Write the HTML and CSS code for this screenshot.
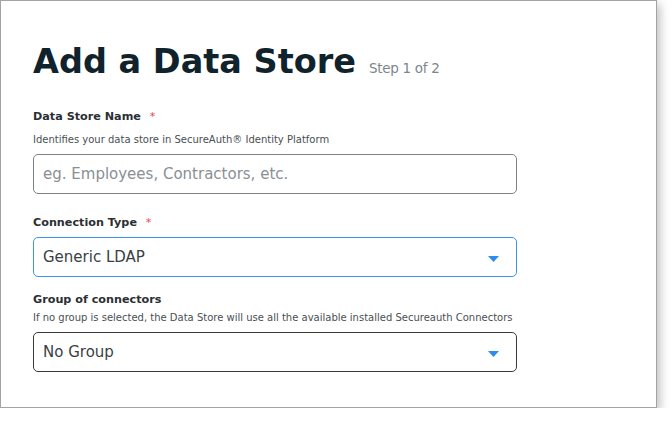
FILE: index.html
```html
<!DOCTYPE html>
<html><head>
<link rel="stylesheet" href="styles.css">
</head>
<body>

<div class="card">
  <div class="title-row">
    <h1 class="title">Add a Data Store</h1>
    <span class="step">Step 1 of 2</span>
  </div>

  <div class="field field-name">
    <div class="label">Data Store Name <span class="req">*</span></div>
    <div class="help">Identifies your data store in SecureAuth&reg; Identity Platform</div>
    <div class="input">eg. Employees, Contractors, etc.</div>
  </div>

  <div class="field field-type">
    <div class="label">Connection Type <span class="req">*</span></div>
    <div class="input select focused">
      <span class="value">Generic LDAP</span>
      <svg class="caret" width="11" height="6" viewBox="0 0 11 6"><polygon points="0,0 11,0 5.5,6" fill="#2d8cf0"/></svg>
    </div>
  </div>

  <div class="field field-group">
    <div class="label">Group of connectors</div>
    <div class="help">If no group is selected, the Data Store will use all the available installed Secureauth Connectors</div>
    <div class="input select dark">
      <span class="value">No Group</span>
      <svg class="caret" width="11" height="6" viewBox="0 0 11 6"><polygon points="0,0 11,0 5.5,6" fill="#2d8cf0"/></svg>
    </div>
  </div>
</div>

</body>
</html>
```

FILE: styles.css
```css
body {
  margin: 0;
  background: #fff;
  font-family: "DejaVu Sans", "Open Sans", sans-serif;
}

/* outer panel with soft shadow */
.card {
  width: 657px;
  height: 408px;
  box-sizing: border-box;
  border: 1px solid #a3a3a3;
  box-shadow: 3px 4px 9px rgba(0, 0, 0, 0.25);
  padding: 40px 0 0 32px;
  background: #fff;
}

.title-row {
  display: flex;
  align-items: baseline;
}
.title {
  margin: 0;
  font-size: 33.5px;
  font-weight: bold;
  color: #10232c;
  line-height: 42px;
}
.step {
  margin-left: 13px;
  font-size: 13.5px;
  color: #7d868c;
  letter-spacing: -0.3px;
}

.field-name { margin-top: 26px; }
.field-type { margin-top: 21px; }
.field-group { margin-top: 15px; }

.label {
  font-size: 11.2px;
  font-weight: bold;
  color: #2b2f33;
  line-height: 16px;
}
.req {
  color: #e8474c;
  font-weight: normal;
  margin-left: 5px;
}
.help {
  font-size: 10px;
  color: #4a4f54;
  line-height: 14px;
}
.field-name .help { margin-top: 8px; margin-bottom: 7px; }
.field-type .label { margin-bottom: 6px; }
.field-group .help { margin-top: 3px; margin-bottom: 7px; }

.input {
  width: 484px;
  height: 40px;
  box-sizing: border-box;
  border: 1px solid #7b8287;
  border-radius: 5px;
  padding: 0 9px;
  display: flex;
  align-items: center;
  font-size: 15px;
  color: #8a8f94;
}
.select {
  justify-content: space-between;
  padding-right: 17px;
}
.select .value { color: #3a3f44; }
.focused { border-color: #3b93ea; }
.dark { border-color: #3a3a3a; }
.caret { margin-top: 3px; }
```
